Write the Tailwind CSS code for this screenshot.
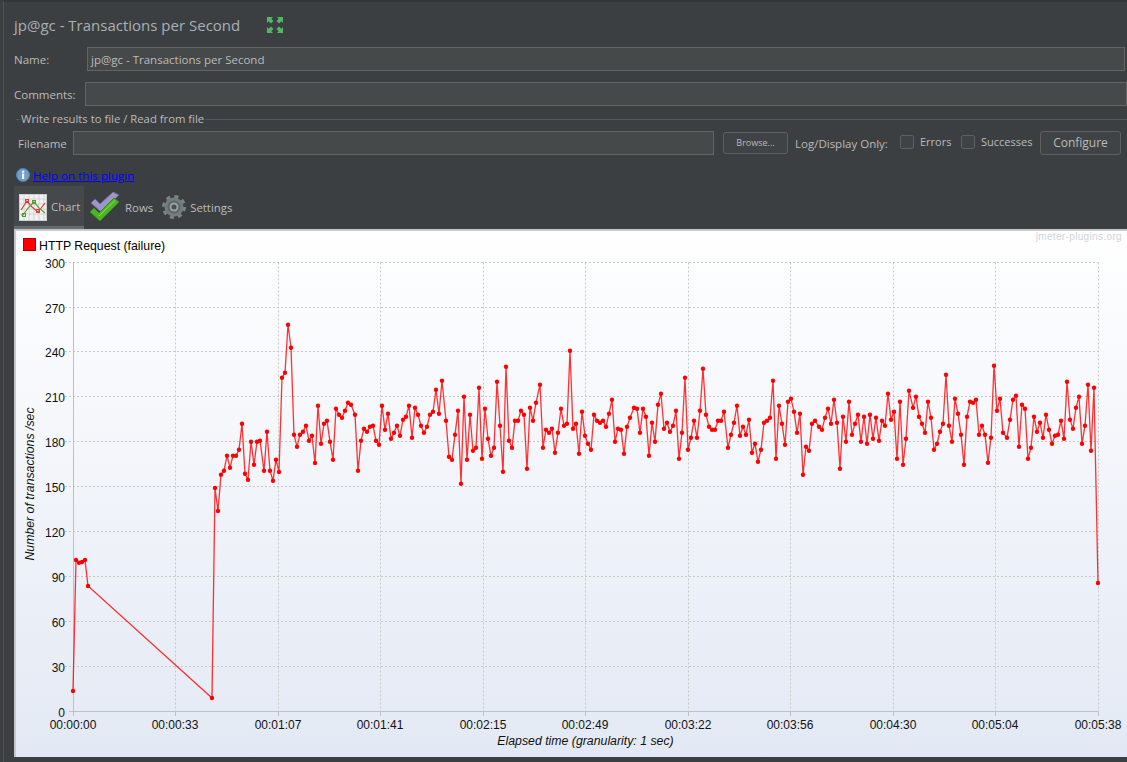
<!DOCTYPE html>
<html lang="en">
<head>
  <meta charset="UTF-8" />
  <title>jp@gc - Transactions per Second</title>
  <script src="https://cdn.jsdelivr.net/npm/@tailwindcss/browser@4"></script>
</head>
<body class="w-[1127px] h-[762px] overflow-hidden bg-[#3c3f41] font-['Open_Sans',sans-serif] text-[11.5px] text-[#bbbbbb]">

  <div class="h-[762px] ml-[3px] pl-[10px] border-l border-[#505355] flex flex-col border-t-2 border-t-[#333638]">

    <!-- title -->
    <div class="h-[45px] flex items-center gap-[26px] pt-[2px]">
      <span class="text-[15px] text-[#a9b0b5]">jp@gc - Transactions per Second</span>
      <svg width="18" height="18" viewBox="0 0 18 18" class="-mt-[2px]">
        <g fill="#55b665">
          <path d="M1 1h6L5.300 2.700 7.500 5 5 7.500 2.700 5.300 1 7z"/>
          <path d="M17 1h-6l1.700 1.700L10.500 5 13 7.500l2.300-2.200L17 7z"/>
          <path d="M1 17h6l-1.700-1.700L7.500 13 5 10.500l-2.300 2.200L1 11z"/>
          <path d="M17 17h-6l1.700-1.700-2.200-2.300 2.500-2.500 2.300 2.200L17 11z"/>
        </g>
      </svg>
    </div>

    <!-- name + comments -->
    <div class="flex items-center h-[24px]">
      <label class="w-[73px] pt-[1px]">Name:</label>
      <div class="w-[1038px] h-[24px] bg-[#45494a] border border-[#646464] px-[3px] leading-[23px]">jp@gc - Transactions per Second</div>
    </div>
    <div class="flex items-center h-[24px] mt-[11px]">
      <label class="w-[71px] pt-[1px]">Comments:</label>
      <div class="w-[1042px] h-[24px] bg-[#45494a] border border-[#646464]"></div>
    </div>

    <!-- write results group -->
    <div class="flex items-center h-[14px] mt-[6px] ml-[2px] gap-[1px]">
      <span class="w-[4px] h-px bg-[#55585a]"></span>
      <span class="text-[11.3px] pt-[1px]">Write results to file / Read from file</span>
      <span class="flex-1 h-px bg-[#55585a]"></span>
    </div>
    <div class="flex items-center h-[24px] mt-[5px] pl-[4px]">
      <label class="w-[55px] pt-[1px]">Filename</label>
      <div class="w-[641px] h-[24px] bg-[#45494a] border border-[#646464]"></div>
      <button class="ml-[9px] w-[65px] h-[22px] rounded-[3px] border border-[#5e6060] bg-[#3f4345] text-[9px] text-[#bbbbbb]">Browse...</button>
      <span class="ml-[7px] w-[105px] pt-[1px]">Log/Display Only:</span>
      <span class="w-[14px] h-[14px] rounded-[2px] border border-[#5e6060] bg-[#3f4345] -mt-[2px]"></span>
      <span class="ml-[6px] w-[41px] -mt-[1px] text-[11px]">Errors</span>
      <span class="w-[14px] h-[14px] rounded-[2px] border border-[#5e6060] bg-[#3f4345] -mt-[2px]"></span>
      <span class="ml-[6px] w-[59px] -mt-[1px] text-[11px]">Successes</span>
      <button class="w-[81px] h-[24px] rounded-[3px] border border-[#5e6060] bg-[#3f4345] text-[12px] text-[#bbbbbb]">Configure</button>
    </div>

    <!-- help -->
    <div class="flex items-center h-[16px] mt-[12px] pl-[2px] gap-[3px]">
      <svg width="14" height="14" viewBox="0 0 14 14">
        <circle cx="7" cy="7" r="6.500" fill="#6d9fd0" stroke="#4d7fb5"/>
        <rect x="6" y="5.500" width="2.200" height="5.500" fill="#fff"/>
        <rect x="6" y="2.700" width="2.200" height="2" fill="#fff"/>
      </svg>
      <a class="text-[#0000ff] underline text-[11.6px] pt-[1px]">Help on this plugin</a>
    </div>

    <!-- tabs -->
    <div class="flex h-[43px] mt-[3px] text-[11.4px]">
      <div class="w-[70px] h-[43px] bg-[#45494b] border-b-[3px] border-[#686c6e] flex items-center pl-[5px] pt-[2px] gap-[4px]">
        <svg width="28" height="27" viewBox="0 0 28 27">
          <rect x="0.500" y="0.500" width="27" height="26" fill="#f2f2f2" stroke="#cfcfcf"/>
          <path d="M5 1v25M10 1v25M15 1v25M20 1v25M25 1v25M1 5h26M1 10h26M1 15h26M1 20h26" stroke="#d4d4d4"/>
          <path d="M2 16L8 7l5 6 6 5 7-9" fill="none" stroke="#d8413c" stroke-width="1.200"/>
          <path d="M2 21l2 0 6-8 5-5 5 6 6 5" fill="none" stroke="#5ca53a" stroke-width="1.200"/>
          <g fill="none" stroke="#d8413c"><rect x="6.500" y="5.500" width="3" height="3"/><rect x="17.500" y="15.500" width="3" height="3"/></g>
          <g fill="none" stroke="#4f9a2d"><rect x="3.500" y="19.500" width="3" height="3"/><rect x="13.500" y="6.500" width="3" height="3"/></g>
        </svg>
        <span>Chart</span>
      </div>
      <div class="flex items-center pl-[5px] h-[41px] pt-[1px]">
        <svg width="30" height="30" viewBox="0 0 30 30">
          <path d="M2 11l4-4 5 5L24 0l6 3-18 17z" fill="#9c97c9" stroke="#6e6a9c"/>
          <path d="M1 20l4-4 5 5L25 6l5 4-19 19z" fill="#4cb522" stroke="#3b8a1e"/>
          <path d="M10 24L26 8.500" stroke="#8ee05f" fill="none"/>
        </svg>
        <span class="ml-[6px] pt-[1px]">Rows</span>
      </div>
      <div class="flex items-center pl-[9px] h-[41px] pt-[1px]">
        <svg width="24" height="26" viewBox="0 0 24 26">
          <circle cx="12" cy="13" r="10.500" fill="none" stroke="#7b8486" stroke-width="3" stroke-dasharray="4.100 4.150"/>
          <circle cx="12" cy="13" r="9.500" fill="#737c7e"/>
          <circle cx="12" cy="13" r="6.500" fill="#5c6567"/>
          <circle cx="12" cy="13" r="4.500" fill="#98a0a2"/>
          <circle cx="12" cy="13" r="2.500" fill="#4a5052"/>
        </svg>
        <span class="ml-[4px] pt-[1px]">Settings</span>
      </div>
    </div>

    <!-- chart panel -->
    <div class="relative w-[1113px] h-[528px] border-l-2 border-t-2 border-[#c8c8c8] bg-white font-['Liberation_Sans',sans-serif]">
      <span class="absolute right-[5px] -top-[2px] text-[10px] tracking-[0.35px] text-[#d0d4db]">jmeter-plugins.org</span>
      <svg width="1111" height="526" viewBox="16 231 1111 526" class="block">
        <defs>
          <linearGradient id="bg" x1="0" y1="0" x2="0" y2="1">
            <stop offset="0" stop-color="#ffffff"/>
            <stop offset="1" stop-color="#e3e9f4"/>
          </linearGradient>
          <marker id="dot" markerUnits="userSpaceOnUse" markerWidth="6" markerHeight="6" refX="3" refY="3">
            <circle cx="3" cy="3" r="2.200" fill="#ff0000"/>
          </marker>
        </defs>
        <rect x="16" y="231" width="1111" height="526" fill="url(#bg)"/>

        <!-- legend -->
        <rect x="23.500" y="238.500" width="12" height="12" fill="#ff0000" stroke="#b00000"/>
        <text x="39" y="249.500" font-size="12.300">HTTP Request (failure)</text>

        <!-- grid -->
        <g stroke="#c8c8c8" stroke-dasharray="2 2" fill="none">
          <path d="M65 262.500H1098.500M65 307.500H1098.500M65 351.500H1098.500M65 396.500H1098.500M65 441.500H1098.500M65 486.500H1098.500M65 531.500H1098.500M65 576.500H1098.500M65 621.500H1098.500M65 666.500H1098.500"/>
          <path d="M175.500 262.500V711M278.500 262.500V711M380.500 262.500V711M483.500 262.500V711M585.500 262.500V711M688.500 262.500V711M790.500 262.500V711M893.500 262.500V711M995.500 262.500V711M1098.500 262.500V711"/>
        </g>
        <!-- axes -->
        <path d="M73.500 262.500V716M69 711.500H1098.500M175.500 711.500V716M278.500 711.500V716M380.500 711.500V716M483.500 711.500V716M585.500 711.500V716M688.500 711.500V716M790.500 711.500V716M893.500 711.500V716M995.500 711.500V716M1098.500 711.500V716" stroke="#c0c0c0" fill="none"/>

        <!-- y labels -->
        <g font-size="12" text-anchor="end" fill="#111">
          <text x="65" y="268">300</text><text x="65" y="313">270</text><text x="65" y="357">240</text>
          <text x="65" y="402">210</text><text x="65" y="447">180</text><text x="65" y="492">150</text>
          <text x="65" y="537">120</text><text x="65" y="582">90</text><text x="65" y="627">60</text>
          <text x="65" y="672">30</text><text x="65" y="717">0</text>
        </g>
        <!-- x labels -->
        <g font-size="12" text-anchor="middle" fill="#111">
          <text x="73" y="729">00:00:00</text><text x="175" y="729">00:00:33</text><text x="278" y="729">00:01:07</text>
          <text x="380" y="729">00:01:41</text><text x="483" y="729">00:02:15</text><text x="585" y="729">00:02:49</text>
          <text x="688" y="729">00:03:22</text><text x="790" y="729">00:03:56</text><text x="893" y="729">00:04:30</text>
          <text x="995" y="729">00:05:04</text><text x="1098" y="729">00:05:38</text>
        </g>
        <text x="585.500" y="745" font-size="12.300" font-style="italic" text-anchor="middle" fill="#111">Elapsed time (granularity: 1 sec)</text>
        <text transform="translate(34 484) rotate(-90)" font-size="12.300" font-style="italic" text-anchor="middle" fill="#111">Number of transactions /sec</text>

        <!-- series -->
        <polyline fill="none" stroke="#ff0000" stroke-width="1.300" stroke-opacity="0.8" marker-start="url(#dot)" marker-mid="url(#dot)" marker-end="url(#dot)" points="
73,691 76,560 79,562.700 82,562 85,560 88,586 212,698 215,488 218,511 221,474.700 224,470.700 227,455.700 230,467.700 233,455.700 236,455.700 239,449.700 242,423.700 245,473.700 248,479.700 251,441.700 254,464.700 257,441.700 260,440.700 264,470.700 267,431.700 270,470.700 273,480.700 276,459.700 279,472 282,377.700 285,372.700 288,324.700 291,347.700 294,434.700 297,446.700 300,434.700 303,431.700 306,425.700 309,440.700 312,435.700 315,463 318,405.700 321,443.700 324,423.700 327,420.700 330,441.700 333,459.700 336,408.700 339,414.700 342,417.700 345,410.700 348,402.700 351,404.700 355,414.700 358,470.700 361,440.700 364,428.700 367,431.700 370,426.700 373,425.700 376,440.700 379,444.700 382,405.700 385,429.700 388,413.700 391,438.700 394,432.700 397,425.700 400,435.700 403,419.700 406,416.700 409,405.700 412,437.700 415,407.700 418,414.700 421,425.700 424,432.700 427,426.700 430,414.700 433,411.700 436,389.700 439,413.700
442,380.700 446,420.700 449,456.700 452,459.700 455,434.700 458,410.700 461,483.700 464,396.700 467,459.700 470,414.700 473,450.700 476,447.700 479,387.700 482,458.700 485,408.700 488,438.700 491,455.700 494,447.700 497,381.700 500,425.700 503,471.700 506,366.700 509,440.700 512,447.700 515,420.700 518,420.700 521,410.700 524,414.700 527,468.700 530,407.700 533,420.700 536,402.700 540,384.700 543,447.700 546,429.700 549,432.700 552,428.700 555,452.700 558,432.700 561,408.700 564,425.700 567,423.700 570,350.700 573,428.700 576,423.700 579,453.700 582,411.700 585,435.700 588,443.700 591,449.700 594,414.700 597,420.700 600,422.700 603,420.700 606,426.700 609,413.700 612,399.700 615,441.700 618,428.700 621,429.700 624,453.700 627,426.700 630,417.700 634,407.700 637,408.700 640,432.700 643,408.700 646,416.700 649,455.700 652,422.700 655,441.700 658,404.700 661,393.700 664,428.700 667,422.700 670,431.700 673,425.700 676,410.700 679,458.700
682,432.700 685,377.700 688,449.700 691,437.700 694,420.700 697,437.700 700,410.700 703,368.700 706,414.700 709,426.700 712,429.700 715,429.700 718,420.700 721,420.700 724,411.700 728,447.700 731,434.700 734,422.700 737,405.700 740,435.700 743,426.700 746,434.700 749,419.700 752,452.700 755,443.700 758,461.700 761,449.700 764,422.700 767,420.700 770,417.700 773,380.700 776,458.700 779,405.700 782,423.700 785,444.700 788,401.700 791,398.700 794,411.700 797,432.700 800,413.700 803,474.700 806,446.700 809,450.700 812,423.700 815,420.700 819,426.700 822,429.700 825,417.700 828,408.700 831,423.700 834,399.700 837,422.700 840,468.700 843,416.700 846,441.700 849,401.700 852,434.700 855,423.700 858,414.700 861,441.700 864,416.700 867,443.700 870,414.700 873,438.700 876,417.700 879,440.700 882,420.700 885,425.700 888,393.700 891,419.700 894,411.700 897,458.700 900,401.700 903,464.700 906,438.700 909,390.700
913,407.700 916,396.700 919,416.700 922,423.700 925,432.700 928,401.700 931,417.700 934,449.700 937,443.700 940,431.700 943,423.700 946,374.700 949,425.700 952,441.700 955,398.700 958,413.700 961,434.700 964,464.700 967,416.700 970,401.700 973,402.700 976,399.700 979,434.700 982,425.700 985,434.700 988,462.700 991,437.700 994,365.700 997,410.700 1000,398.700 1003,432.700 1007,437.700 1010,419.700 1013,399.700 1016,395.700 1019,446.700 1022,404.700 1025,408.700 1028,458.700 1031,447.700 1034,416.700 1037,431.700 1040,422.700 1043,437.700 1046,414.700 1049,429.700 1052,443.700 1055,435.700 1058,434.700 1061,420.700 1064,438.700 1067,381.700 1070,419.700 1073,428.700 1076,407.700 1079,396.700 1082,443.700 1085,425.700 1088,384.700 1091,450.700 1094,387.700 1098,583"/>
      </svg>
    </div>
  </div>
</body>
</html>
